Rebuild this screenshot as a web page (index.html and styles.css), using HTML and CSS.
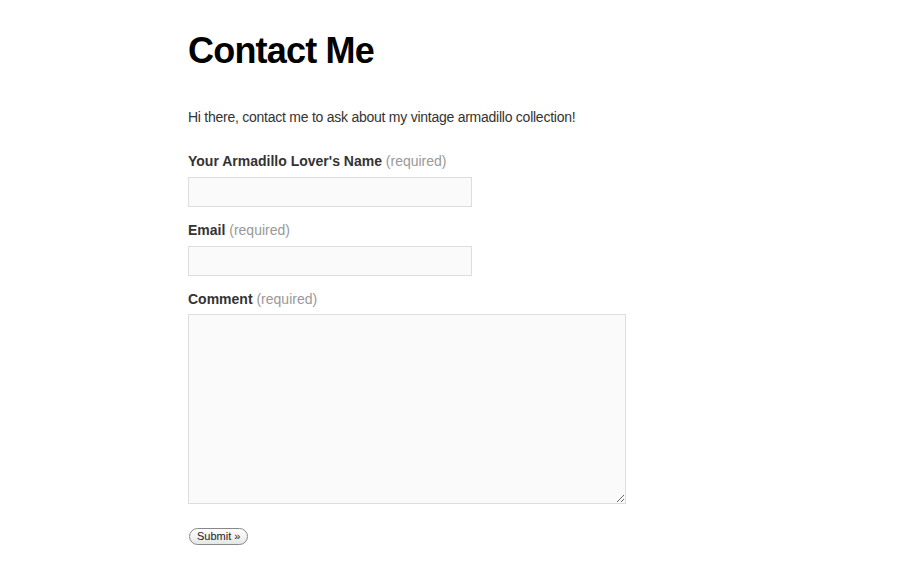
FILE: index.html
```html
<!DOCTYPE html>
<html lang="en">
<head>
    <meta charset="UTF-8">
    <title>Contact Me</title>
    <link rel="stylesheet" href="styles.css">
</head>
<body>
    <div class="page">
        <h1 class="title">Contact Me</h1>
        <p class="intro">Hi there, contact me to ask about my vintage armadillo collection!</p>

        <form class="contactForm" onsubmit="return false">
            <label class="fieldLabel" for="name">Your Armadillo Lover's Name <span class="req">(required)</span></label>
            <input id="name" class="textInput" type="text">

            <label class="fieldLabel" for="email">Email <span class="req">(required)</span></label>
            <input id="email" class="textInput" type="text">

            <label class="fieldLabel commentLabel" for="comment">Comment <span class="req">(required)</span></label>
            <textarea id="comment" class="commentBox"></textarea>

            <div class="submitRow">
                <button class="submitBtn" type="submit">Submit &raquo;</button>
            </div>
        </form>
    </div>
</body>
</html>
```

FILE: styles.css
```css
*{
    font-family: "Liberation Sans", Arial, Helvetica, sans-serif;
    box-sizing: border-box;
}

body{
    margin: 0;
    background: #fff;
    color: #333;
}

.page{
    padding: 29px 0 0 188px;
}

.title{
    margin: 0;
    font-size: 36px;
    line-height: 44px;
    letter-spacing: -0.8px;
    color: #000;
    font-weight: bold;
}

.intro{
    margin: 34px 0 0 0;
    font-size: 14px;
    line-height: 20px;
    letter-spacing: -0.25px;
    color: #333;
}

.contactForm{
    display: flex;
    flex-direction: column;
    align-items: flex-start;
    margin-top: 24px;
}

.fieldLabel{
    font-size: 14px;
    line-height: 20px;
    font-weight: bold;
    color: #333;
    margin-bottom: 6px;
}

.commentLabel{
    margin-bottom: 5px;
}

.req{
    font-weight: normal;
    color: #999;
}

.textInput{
    width: 284px;
    height: 30px;
    margin: 0 0 13px 0;
    border: 1px solid #ddd;
    background: #fafafa;
}

.commentBox{
    width: 438px;
    height: 190px;
    margin: 0;
    border: 1px solid #ddd;
    background: #fafafa;
    resize: both;
}

.submitRow{
    margin-top: 22px;
}

.submitBtn{
    font-size: 11px;
    padding: 1px 7px;
    margin-left: 1px;
    height: 17px;
    border: 1px solid #888;
    border-radius: 9px;
    background: linear-gradient(#fff, #e6e6e6);
    color: #222;
}
```
